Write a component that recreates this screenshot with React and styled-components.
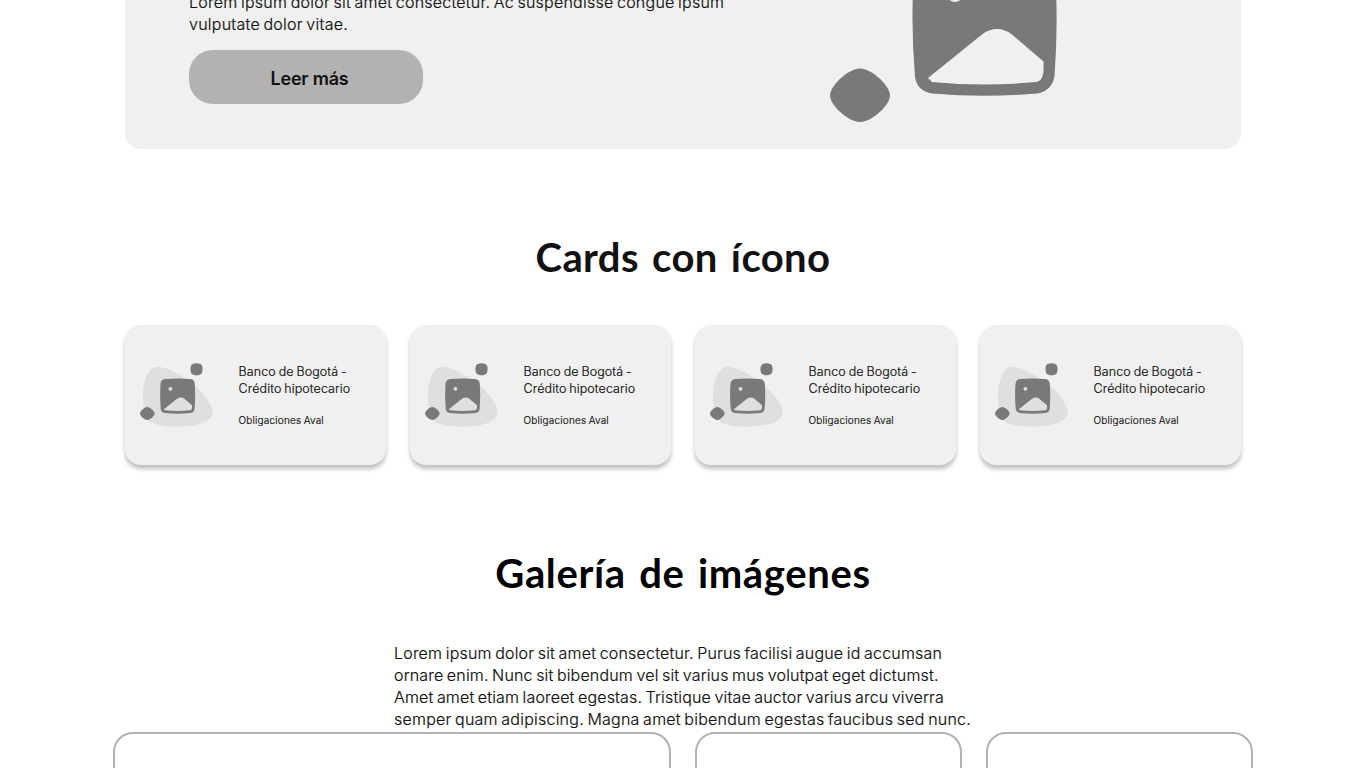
import React from "react";
import styled, { createGlobalStyle } from "styled-components";

const GlobalStyle = createGlobalStyle`
  * { box-sizing: border-box; }
  html, body { margin: 0; padding: 0; }
  body {
    height: 768px;
    overflow: hidden;
    background: #fff;
    color: #111;
    font-family: Inter, "Liberation Sans", sans-serif;
  }
`;

const Page = styled.main`
  height: 768px;
  overflow: hidden;
  display: flex;
  flex-direction: column;
  align-items: center;
`;

const Line = styled.span`
  display: block;
  white-space: nowrap;
  letter-spacing: ${(p) => p.$track || 0}px;
  word-spacing: ${(p) => p.$word || 0}px;
`;

const Hero = styled.section`
  width: 1116px;
  height: 149px;
  flex: none;
  display: flex;
  align-items: flex-start;
  padding-left: 64px;
  overflow: hidden;
  background: #f0f0f0;
  border-radius: 0 0 16px 16px;
`;

const HeroCopy = styled.div`
  width: 637px;
  flex: none;
  margin-top: -9px;
`;

const HeroArt = styled.div`
  flex: none;
  margin-top: -116px;
  line-height: 0;
`;

const BodyText = styled.p`
  margin: 0;
  font-size: 16px;
  font-weight: 300;
  line-height: 22px;
  -webkit-text-stroke: 0.2px #111;
`;

const Button = styled.button`
  display: block;
  width: 234px;
  height: 54px;
  margin-top: 15px;
  padding: 4px 0 0 7px;
  border: 0;
  border-radius: 24px;
  background: #b2b2b2;
  color: #111;
  font: 600 18px/24px Inter, "Liberation Sans", sans-serif;
  letter-spacing: -0.2px;
`;

const Heading = styled.h2`
  margin: 80px 0 0;
  color: ${(p) => p.$color};
  font: 700 40px/56px Lato, "Liberation Sans", sans-serif;
  flex: none;
`;

const CardRow = styled.section`
  display: grid;
  grid-template-columns: repeat(4, 261px);
  gap: 24px;
  margin-top: 40px;
  flex: none;
`;

const Card = styled.article`
  height: 140px;
  display: flex;
  align-items: flex-start;
  padding: 37px 0 0 14.2px;
  background: #f0f0f0;
  border-radius: 16px;
  box-shadow: 0 4px 4px rgba(0, 0, 0, 0.25);
`;

const CardCopy = styled.div`
  margin: 1px 0 0 25.3px;
  font-weight: 300;
  -webkit-text-stroke: 0.2px #111;
`;

const CardTitle = styled.h3`
  margin: 0;
  font-size: 12.5px;
  font-weight: 300;
  line-height: 17px;
`;

const CardNote = styled.p`
  margin: 16px 0 0;
  font-size: 10px;
  line-height: 14px;
`;

const GalleryIntro = styled(BodyText)`
  width: 578px;
  margin-top: 41px;
  flex: none;
`;

const Gallery = styled.section`
  display: grid;
  grid-template-columns: 558px 267px 267px;
  gap: 24px;
  margin-top: 2px;
  flex: none;
`;

const Frame = styled.div`
  height: 260px;
  border: 2px solid #b2b2b2;
  border-radius: 20px;
`;

function Artwork({ width, height, blob }) {
  return (
    <svg width={width} height={height} viewBox="826 -116 304 270" aria-hidden="true">
      {blob && (
        <path
          fill="#dfdfdf"
          d="M842 40C838-15 856-97 902-97C940-97 1000-62 1052-22C1090 8 1128 60 1128 90C1128 135 1050 149 985 149C925 149 862 139 852 108C847 88 844 66 842 40Z"
        />
      )}
      <path
        fill="#797979"
        fillRule="evenodd"
        d="M933-46C968-49 1002-49 1036-46Q1054-44 1055-26Q1058.500 24 1054.500 76Q1052 91 1037 93.500Q984 98 932 93.500Q917 91 915 77Q910.500 22 914-26Q916-44 933-46ZM928 78L982 34.500Q989 29 997 29Q1005 29 1012 34.500L1043.500 61.500V71Q1043 81 1036 82Q984 87 932 82Z M947-6a8 8 0 1 0 16 0a8 8 0 1 0-16 0Z"
      />
      <path
        fill="#797979"
        d="M860 68.500C872 68.500 890 86 890 95.500C890 105 872 122 860 122C848 122 830 105 830 95.500C830 86 848 68.500 860 68.500Z"
      />
      <path
        fill="#797979"
        d="M1053-110Q1062-112 1071-110Q1084-108 1086-96Q1088-87 1086-77Q1084-65 1071-63Q1062-61 1053-63Q1040-65 1038-77Q1036-87 1038-96Q1040-108 1053-110Z"
      />
    </svg>
  );
}

const intro = [
  ["Lorem ipsum dolor sit amet consectetur. Purus facilisi augue id accumsan", 0.195],
  ["ornare enim. Nunc sit bibendum vel sit varius mus volutpat eget dictumst.", 0.17],
  ["Amet amet etiam laoreet egestas. Tristique vitae auctor varius arcu viverra", 0.16],
  ["semper quam adipiscing. Magna amet bibendum egestas faucibus sed nunc.", 0.23],
];

export default function App() {
  return (
    <Page>
      <GlobalStyle />
      <Hero>
        <HeroCopy>
          <BodyText>
            <Line $track={0.235} $word={-1.2}>Lorem ipsum dolor sit amet consectetur. Ac suspendisse congue ipsum</Line>
            <Line $track={0.25} $word={-1.2}>vulputate dolor vitae.</Line>
          </BodyText>
          <Button>Leer más</Button>
        </HeroCopy>
        <HeroArt>
          <Artwork width={304} height={270} />
        </HeroArt>
      </Hero>

      <Heading $color="#111">
        <Line $track={0.4} $word={3}>Cards con ícono</Line>
      </Heading>
      <CardRow>
        {[0, 1, 2, 3].map((id) => (
          <Card key={id}>
            <Artwork width={74.1} height={65.9} blob />
            <CardCopy>
              <CardTitle>
                <Line $track={0.1} $word={-0.8}>Banco de Bogotá -</Line>
                <Line $track={0.1} $word={-0.8}>Crédito hipotecario</Line>
              </CardTitle>
              <CardNote>
                <Line $track={0.19} $word={-0.6}>Obligaciones Aval</Line>
              </CardNote>
            </CardCopy>
          </Card>
        ))}
      </CardRow>

      <Heading $color="#000">
        <Line $track={0.65} $word={3}>Galería de imágenes</Line>
      </Heading>
      <GalleryIntro>
        {intro.map(([text, track]) => (
          <Line key={text} $track={track} $word={-1.2}>{text}</Line>
        ))}
      </GalleryIntro>
      <Gallery>
        <Frame />
        <Frame />
        <Frame />
      </Gallery>
    </Page>
  );
}
